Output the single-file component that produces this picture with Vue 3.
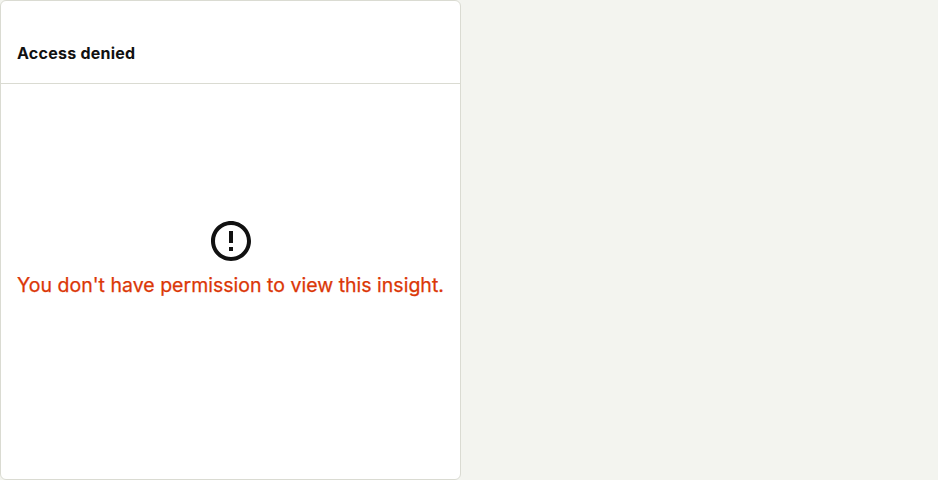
<script setup>
const title = 'Access denied'
const message = "You don't have permission to view this insight."
</script>

<template>
  <div class="scene">
    <article class="card">
      <header class="card-header">
        <h4 class="title">{{ title }}</h4>
      </header>
      <div class="card-body">
        <svg class="icon" viewBox="0 0 24 24" fill="currentColor" aria-hidden="true">
          <path fill-rule="evenodd" clip-rule="evenodd" d="M12 2C6.48 2 2 6.48 2 12s4.48 10 10 10 10-4.48 10-10S17.52 2 12 2zm0 18c-4.41 0-8-3.59-8-8s3.59-8 8-8 8 3.59 8 8-3.59 8-8 8zM11 7h2v6h-2V7zM11 15h2v2h-2v-2z" />
        </svg>
        <h2 class="message">{{ message }}</h2>
      </div>
    </article>
  </div>
</template>

<style>
body {
  background: #f3f4ef;
}
</style>

<style scoped>
.scene {
  display: flex;
  height: 480px;
  font-family: Inter, "Liberation Sans", sans-serif;
  color: #111;
}
.card {
  box-sizing: border-box;
  display: flex;
  flex-direction: column;
  width: 461px;
  border: 1px solid #dadbd2;
  border-radius: 6px;
  background: #fff;
}
.card-header {
  box-sizing: border-box;
  height: 83px;
  padding: 40px 16px 0;
  border-bottom: 1px solid #dadbd2;
}
.title {
  margin: 0;
  font-size: 16px;
  font-weight: 700;
  line-height: 24px;
  letter-spacing: 0.25px;
}
.card-body {
  flex: 1;
  display: flex;
  flex-direction: column;
  align-items: center;
  padding: 133px 16px 0;
}
.icon {
  display: block;
  width: 48px;
  height: 48px;
}
.message {
  margin: 6px 0 0;
  font-size: 19.5px;
  font-weight: 400;
  line-height: 28px;
  letter-spacing: 0.01px;
  white-space: nowrap;
  color: #db3707;
  -webkit-text-stroke: 0.25px currentColor;
}
</style>
